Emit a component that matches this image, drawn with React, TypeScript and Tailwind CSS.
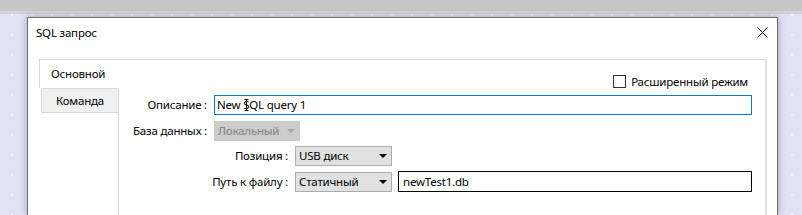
import React from 'react';

const font = "font-['Segoe_UI','Noto_Sans',sans-serif]";

// small filled dropdown triangle
const Arrow: React.FC<{ color: string }> = ({ color }) => (
  <svg width="8" height="4" viewBox="0 0 8 4">
    <path d="M0 0 L8 0 L4 4 Z" fill={color} />
  </svg>
);

interface ComboProps {
  value: string;
  width: string;
  disabled?: boolean;
}

const Combo: React.FC<ComboProps> = ({ value, width, disabled }) => (
  <div
    className={`${width} h-[20px] flex items-center justify-between pl-[3px] pr-[4px] border ${
      disabled
        ? 'bg-[#cccccc] border-[#cccccc] text-[#838383]'
        : 'bg-[#e1e1e1] border-[#adadad] text-black'
    }`}
  >
    <span className="leading-none">{value}</span>
    <Arrow color={disabled ? '#a6a6a6' : '#000000'} />
  </div>
);

export default function App() {
  return (
    <div
      className={`w-[802px] h-[215px] overflow-hidden flex flex-col bg-[#e2e2f4] bg-[radial-gradient(circle,#f2f2fb_0.7px,transparent_1.1px)] bg-[length:20px_20px] bg-[position:2px_5px] text-[11.5px] tracking-[-0.2px] text-black ${font}`}
    >
      {/* window strip above */}
      <div className="h-[11px] shrink-0 bg-[#c7c7c7]" />
      <div className="h-[3px] shrink-0 bg-[#d2d2d6]" />
      <div className="h-[3px] shrink-0" />

      {/* Dialog */}
      <div className="ml-[27px] w-[751px] flex-1 flex flex-col bg-white border border-b-0 border-[#707070] shadow-[0_0_7px_rgba(70,70,110,0.45)]">
        {/* Title bar */}
        <div className="h-[30px] shrink-0 flex items-center justify-between pl-[8px] pr-[9px]">
          <span>SQL запрос</span>
          <svg width="11" height="11" viewBox="0 0 11 11" className="mt-[-1px]">
            <path d="M0.5 0.5 L10.5 10.5 M10.5 0.5 L0.5 10.5" stroke="#000" strokeWidth="1" />
          </svg>
        </div>

        {/* Body */}
        <div className="flex-1 flex pt-[11px] pl-[11px] pr-[10px]">
          {/* Tabs */}
          <div className="w-[80px] flex flex-col">
            <div className="h-[29px] flex items-center pl-[11px] bg-white border-t border-l border-[#d9d9d9]">
              Основной
            </div>
            <div className="h-[25px] ml-[2px] flex items-center justify-center bg-[#f0f0f0] border border-[#d9d9d9]">
              Команда
            </div>
            <div className="flex-1 border-r border-[#d9d9d9]" />
          </div>

          {/* Content pane */}
          <div className="flex-1 flex flex-col border-t border-r-2 border-[#e3e3e3] border-t-[#d9d9d9]">
            <div className="mt-[15px] h-[13px] flex items-center justify-end pr-[17px] gap-[5px]">
              <div className="w-[13px] h-[13px] border border-[#333333] bg-white" />
              <span className="leading-none">Расширенный режим</span>
            </div>

            <div className="mt-[7px] flex items-center">
              <span className="w-[88px] text-right">Описание :</span>
              <div className="relative ml-[7px] w-[538px] h-[20px] flex items-center pl-[2px] border border-[#0078d7]">
                <span className="leading-none">New SQL query 1</span>
                {/* mouse I-beam */}
                <svg width="5" height="12" viewBox="0 0 5 12" className="absolute left-[29px] top-[3px]">
                  <path d="M2.5 0.5 V11.5 M0.5 0.5 H4.5 M0.5 11.5 H4.5" stroke="#000" strokeWidth="1" />
                </svg>
              </div>
            </div>

            <div className="mt-[6px] flex items-center">
              <span className="w-[88px] text-right">База данных :</span>
              <div className="ml-[7px]">
                <Combo value="Локальный" width="w-[86px]" disabled />
              </div>
            </div>

            <div className="mt-[5px] flex items-center">
              <span className="w-[169px] text-right">Позиция :</span>
              <div className="ml-[7px]">
                <Combo value="USB диск" width="w-[97px]" />
              </div>
            </div>

            <div className="mt-[5px] flex items-center">
              <span className="w-[169px] text-right">Путь к файлу :</span>
              <div className="ml-[7px]">
                <Combo value="Статичный" width="w-[97px]" />
              </div>
              <div className="ml-[6px] w-[354px] h-[21px] flex items-center pl-[4px] border border-black">
                <span className="leading-none">newTest1.db</span>
              </div>
            </div>
          </div>
        </div>
      </div>
    </div>
  );
}
